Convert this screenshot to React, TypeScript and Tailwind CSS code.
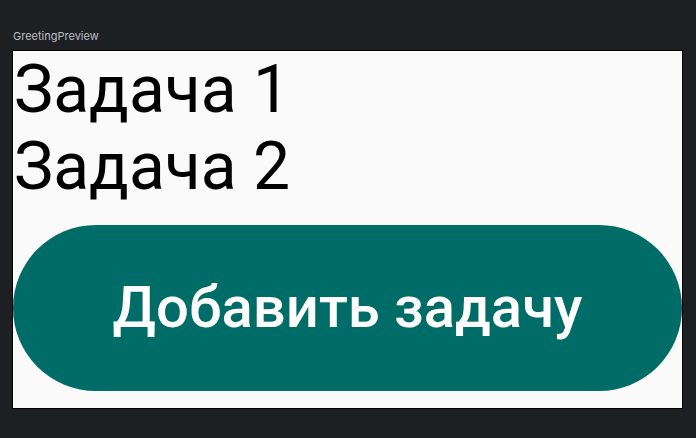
export default function App() {
    return (
        <div className='w-[696px] h-[438px] bg-[#1e1f22] overflow-hidden' style={{fontFamily: "Roboto, sans-serif"}}>
            <div className='pl-[13px] pt-[30px] h-[50px] text-[11px] leading-[13px] text-[#bcbec4]'
                 style={{fontFamily: "Inter, sans-serif"}}>
                GreetingPreview
            </div>
            <div className='ml-[12px] w-[671px] h-[359px] border border-black bg-[#fafafa] flex flex-col'>
                <p className='text-[66px] leading-[77px] text-black pl-[1px]'>Задача 1</p>
                <p className='text-[66px] leading-[77px] text-black pl-[1px]'>Задача 2</p>
                <button
                    className='mt-[20px] h-[166px] w-full rounded-full bg-[#006c67] text-white text-[58px] font-medium flex items-center justify-center pb-[2px]'>
                    Добавить задачу
                </button>
            </div>
        </div>
    );
}
